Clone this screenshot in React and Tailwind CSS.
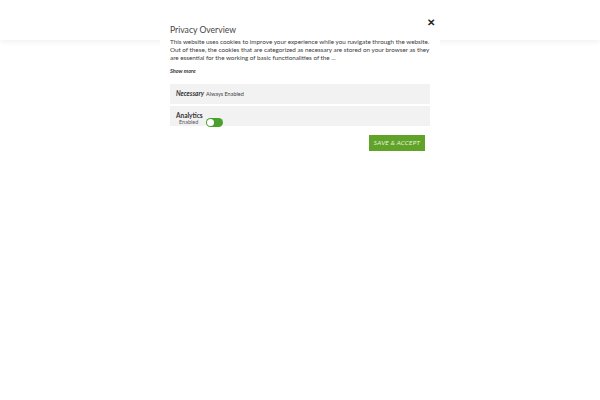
export default function App() {
  return (
    <div className="relative w-[600px] h-[400px] bg-white overflow-hidden" style={{ fontFamily: "Lato, 'Open Sans', sans-serif" }}>
      <div className="h-[40px] w-full bg-white shadow-[0_2px_6px_rgba(0,0,0,0.06)]" />
      <div className="absolute left-[160px] top-0 w-[280px] bg-white px-[10px] pt-[16px] pb-[8px]">
        <button className="absolute right-[5px] top-[17px] text-[10px] leading-none text-[#222] font-bold">✕</button>
        <div className="text-[8.6px] leading-[12px] text-[#444] mt-[8px]">Privacy Overview</div>
        <p className="mt-[2px] text-[6.3px] leading-[8px] text-[#3a3a3a]">
          This website uses cookies to improve your experience while you navigate through the website. Out of these, the cookies that are categorized as necessary are stored on your browser as they are essential for the working of basic functionalities of the ...
        </p>
        <div className="mt-[5px] text-[5.5px] leading-[8px] italic font-bold text-[#333]">Show more</div>
        <div className="mt-[9px] h-[20px] bg-[#f2f2f2] flex items-center px-[6px] gap-[2px]">
          <span className="text-[6.5px] font-bold italic text-[#333]">Necessary</span>
          <span className="text-[5.5px] text-[#444]">Always Enabled</span>
        </div>
        <div className="mt-[2px] h-[20px] bg-[#f2f2f2] flex items-start px-[6px] pt-[6px]">
          <div className="flex flex-col">
            <span className="text-[6.5px] leading-[7px] font-bold text-[#333]">Analytics</span>
            <span className="text-[5.5px] leading-[6px] text-[#555] pl-[3px]">Enabled</span>
          </div>
          <div className="ml-[3px] mt-[6px] w-[17px] h-[9px] rounded-full bg-[#4aa02c] relative">
            <div className="absolute left-[1px] top-[1px] w-[7px] h-[7px] rounded-full bg-white" />
          </div>
        </div>
        <div className="flex justify-end mt-[9px] pr-[5px]">
          <button className="w-[56px] h-[16px] bg-[#61a229] text-[#eaf5e0] text-[6.3px] italic tracking-[0.04em]">SAVE &amp; ACCEPT</button>
        </div>
      </div>
    </div>
  );
}
